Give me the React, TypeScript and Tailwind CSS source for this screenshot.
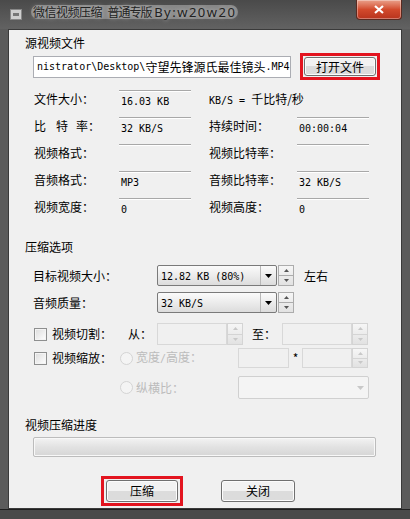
import type { ReactNode } from "react";

const cjk = "font-['Noto_Sans_CJK_SC',sans-serif]";
const mono = "font-['DejaVu_Sans_Mono',monospace] text-[10px]";

function A({ children, className = "" }: { children: ReactNode; className?: string }) {
  return <span className={`${mono} ${className}`}>{children}</span>;
}

// read-only value box, only the top edge is drawn
function Field({ children }: { children?: ReactNode }) {
  return (
    <div className="mt-[4px] h-[19px] w-[72px] border-t border-[#a8a8a8] shadow-[inset_0_1px_0_#ffffff] pl-[2px] pt-[2px] leading-[14px]">
      {children}
    </div>
  );
}

function InfoRow({ l1, v1, l2, v2, noField }: { l1: ReactNode; v1?: ReactNode; l2: ReactNode; v2?: ReactNode; noField?: boolean }) {
  return (
    <div className="flex h-[27px] pl-[25px]">
      <div className="w-[85px] pt-[6px] leading-[14px]">{l1}</div>
      <Field>{v1}</Field>
      <div className="ml-[18px] w-[88px] whitespace-nowrap pt-[6px] leading-[14px]">{l2}</div>
      {!noField && <Field>{v2}</Field>}
    </div>
  );
}

function Spin({ disabled, h = 21 }: { disabled?: boolean; h?: number }) {
  const c = disabled ? "border-[#d4d4d4] text-[#c8c8c8]" : "border-[#acacac] text-[#555]";
  return (
    <div className={`flex w-[16px] flex-col border bg-gradient-to-b from-[#f6f6f6] to-[#e2e2e2] ${c}`} style={{ height: h }}>
      <div className="flex flex-1 items-center justify-center border-b border-inherit">
        <svg width="5" height="3" viewBox="0 0 5 3"><path d="M0 3 L2.5 0 L5 3 Z" fill="currentColor" /></svg>
      </div>
      <div className="flex flex-1 items-center justify-center">
        <svg width="5" height="3" viewBox="0 0 5 3"><path d="M0 0 L2.5 3 L5 0 Z" fill="currentColor" /></svg>
      </div>
    </div>
  );
}

function Combo({ children, w, h = 21, disabled }: { children?: ReactNode; w: number; h?: number; disabled?: boolean }) {
  return (
    <div
      className={`flex items-center rounded-[2px] border pl-[3px] ${disabled ? "border-[#d0d0d0] bg-[#f4f4f4]" : "border-[#7a7a7a] bg-gradient-to-b from-[#fbfbfb] via-[#ececec] to-[#dcdcdc]"}`}
      style={{ width: w, height: h }}
    >
      <div className="flex-1 leading-[14px]">{children}</div>
      <div className={`flex h-full w-[16px] items-center justify-center ${disabled ? "text-[#c8c8c8]" : "border-l border-[#b8b8b8] text-black"}`}>
        <svg width="7" height="4" viewBox="0 0 7 4"><path d="M0 0 L3.5 4 L7 0 Z" fill="currentColor" /></svg>
      </div>
    </div>
  );
}

function Edit({ w, h }: { w: number; h: number }) {
  return <div className="border border-[#d8d8d8] bg-[#f0f0f0]" style={{ width: w, height: h }} />;
}

function Check() {
  return <div className="h-[13px] w-[13px] border border-[#8e8f8f] bg-gradient-to-br from-[#dcdcdc] to-[#ffffff] shadow-[inset_0_0_0_1px_#f4f4f4]" />;
}

function Radio() {
  return <div className="h-[13px] w-[13px] rounded-full border border-[#d4d4d4] bg-[#f4f4f4]" />;
}

function Button({ children, w, h }: { children: ReactNode; w: number; h: number }) {
  return (
    <div
      className="flex items-center justify-center rounded-[3px] border border-[#707070] bg-gradient-to-b from-[#f2f2f2] from-50% to-[#dcdcdc] to-50% leading-[14px] shadow-[inset_0_0_0_1px_#fcfcfc]"
      style={{ width: w, height: h }}
    >
      {children}
    </div>
  );
}

export default function App() {
  return (
    <div className={`${cjk} flex h-[519px] w-[410px] flex-col bg-[#5b5b5b] text-[12px] text-black`}>
      {/* title bar */}
      <div className="flex h-[29px] items-start bg-gradient-to-b from-[#4a4a4a] to-[#626262]">
        <div className="ml-[10px] mt-[9px] flex h-[11px] w-[12px] items-center justify-center border border-[#888] bg-[#cfcfcf]">
          <div className="h-[3px] w-[6px] bg-[#777]" />
        </div>
        <div className="ml-[9px] mt-[5px] whitespace-nowrap rounded-[8px] bg-[#878787] px-[2px] leading-[14px] text-[#222] [text-shadow:0_0_4px_#d0d0d0]">
          <span className="tracking-[-0.5px]">微信视频压缩</span>&nbsp;&nbsp;
          <span className="tracking-[-1px]">普通专版</span>{" "}
          <span className="font-['Noto_Sans',sans-serif] text-[13px] tracking-[1.5px]">By:w20w20</span>
        </div>
        <div className="ml-auto mr-[8px] flex h-[20px] w-[46px] items-center justify-center rounded-b-[4px] border border-t-0 border-[#5a2a20] bg-gradient-to-b from-[#e9a08a] via-[#d24a2c] to-[#b8331d] shadow-[inset_0_0_0_1px_rgba(255,255,255,0.35)]">
          <svg width="10" height="9" viewBox="0 0 10 9">
            <path d="M1 1 L9 8 M9 1 L1 8" stroke="#ffffff" strokeWidth="2.2" />
          </svg>
        </div>
      </div>

      {/* client area */}
      <div className="mx-[8px] flex flex-1 flex-col border border-[#3a3a3a] bg-[#f0f0f0]">
        <div className="ml-[16px] mt-[6px] leading-[14px]">源视频文件</div>

        <div className="mt-[3px] flex items-center">
          <div className="ml-[24px] flex h-[22px] w-[258px] items-center overflow-hidden whitespace-nowrap border border-[#abadb3] bg-white pl-[3px] leading-[14px]">
            <A>nistrator\Desktop\</A>守望先锋源氏最佳镜头<A>.MP4</A>
          </div>
          <div className="ml-[9px] flex h-[27px] w-[80px] items-center justify-center border-[3px] border-[#e3141f]">
            <Button w={72} h={19}>打开文件</Button>
          </div>
        </div>

        <div className="mt-[6px]">
          <InfoRow l1="文件大小：" v1={<A>16.03 KB</A>} l2={<><A>KB/S = </A>千比特/秒</>} noField />
          <InfoRow
            l1={<><span className="mr-[10px]">比</span><span className="mr-[8px]">特</span>率：</>}
            v1={<A>32 KB/S</A>}
            l2="持续时间："
            v2={<A>00:00:04</A>}
          />
          <InfoRow l1="视频格式：" l2="视频比特率：" />
          <InfoRow l1="音频格式：" v1={<A>MP3</A>} l2="音频比特率：" v2={<A>32 KB/S</A>} />
          <InfoRow l1="视频宽度：" v1={<A>0</A>} l2="视频高度：" v2={<A>0</A>} />
        </div>

        <div className="ml-[16px] mt-[19px] leading-[14px]">压缩选项</div>

        <div className="mt-[11px] flex items-center">
          <div className="ml-[24px] w-[124px] leading-[14px]">目标视频大小：</div>
          <Combo w={120}><A>12.82 KB (80%)</A></Combo>
          <div className="ml-[1px]"><Spin /></div>
          <div className="ml-[10px] leading-[14px]">左右</div>
        </div>

        <div className="mt-[6px] flex items-center">
          <div className="ml-[24px] w-[124px] leading-[14px]">音频质量：</div>
          <Combo w={120}><A>32 KB/S</A></Combo>
          <div className="ml-[1px]"><Spin /></div>
        </div>

        <div className="mt-[10px] flex items-center">
          <div className="ml-[25px]"><Check /></div>
          <div className="ml-[5px] w-[76px] leading-[14px]">视频切割：</div>
          <div className="w-[29px] leading-[14px]">从：</div>
          <Edit w={70} h={22} />
          <Spin disabled h={22} />
          <div className="ml-[9px] w-[30px] leading-[14px]">至：</div>
          <Edit w={70} h={22} />
          <Spin disabled h={22} />
        </div>

        <div className="mt-[3px] flex items-center">
          <div className="ml-[25px]"><Check /></div>
          <div className="ml-[5px] w-[68px] leading-[14px]">视频缩放：</div>
          <Radio />
          <div className="ml-[3px] w-[102px] leading-[14px] text-[#bcbcbc]">宽度<A>/</A>高度：</div>
          <Edit w={51} h={20} />
          <div className="w-[13px] text-center leading-[14px]">*</div>
          <Edit w={50} h={20} />
          <Spin disabled h={20} />
        </div>

        <div className="mt-[8px] flex items-center">
          <div className="ml-[111px]"><Radio /></div>
          <div className="ml-[3px] w-[102px] leading-[14px] text-[#bcbcbc]">纵横比：</div>
          <Combo w={131} h={23} disabled />
        </div>

        <div className="ml-[16px] mt-[19px] leading-[14px]">视频压缩进度</div>

        <div className="ml-[24px] mt-[5px] h-[20px] w-[343px] rounded-[2px] border border-[#bcbcbc] bg-gradient-to-b from-[#f3f3f3] via-[#e2e2e2] to-[#d6d6d6] shadow-[inset_0_0_0_1px_#f8f8f8]" />

        <div className="mt-[19px] flex items-center">
          <div className="ml-[92px] flex h-[30px] w-[82px] items-center justify-center border-[3px] border-[#e3141f]">
            <Button w={72} h={22}>压缩</Button>
          </div>
          <div className="ml-[38px]">
            <Button w={74} h={22}>关闭</Button>
          </div>
        </div>
      </div>
      <div className="h-[10px] border-t border-[#1e1e1e] bg-[#4a4a4a]" />
    </div>
  );
}
